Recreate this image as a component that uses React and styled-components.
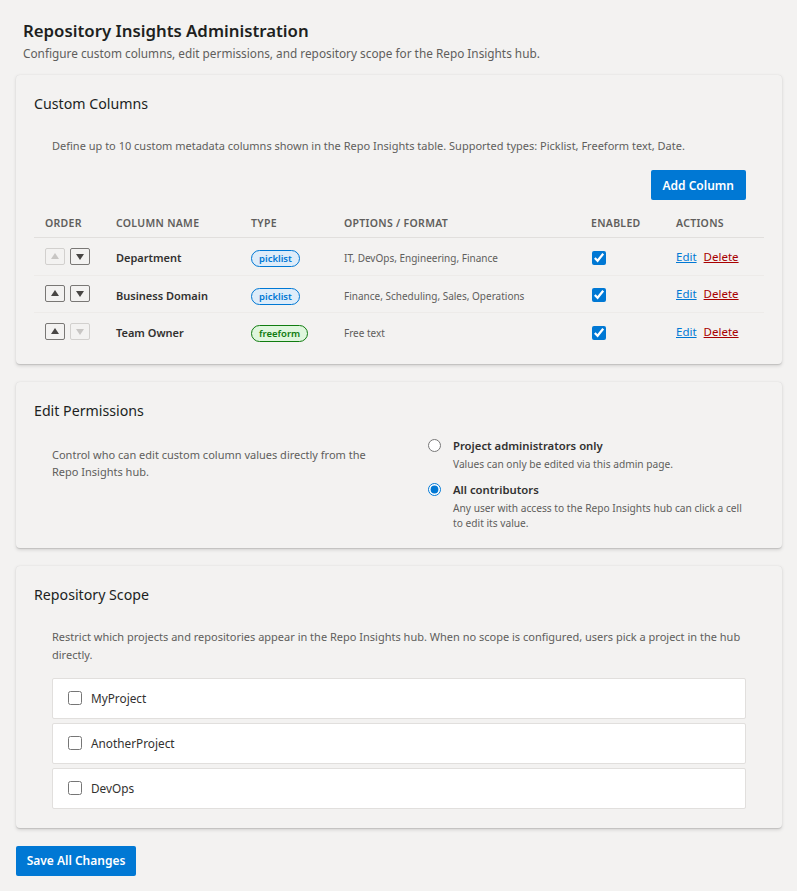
import styled, { createGlobalStyle } from 'styled-components';

const GlobalStyle = createGlobalStyle`
  body {
    margin: 0;
    background: #f3f2f1;
    font-family: "Segoe UI", "Noto Sans", sans-serif;
    color: #323130;
  }
`;

const columns = [
  { name: 'Department', type: 'picklist', options: 'IT, DevOps, Engineering, Finance', first: true },
  { name: 'Business Domain', type: 'picklist', options: 'Finance, Scheduling, Sales, Operations' },
  { name: 'Team Owner', type: 'freeform', options: 'Free text', last: true },
];

const projects = ['MyProject', 'AnotherProject', 'DevOps'];

// small filled triangle used by the reorder buttons
const Arrow = ({ down }) => (
  <svg width="8" height="7" viewBox="0 0 8 7">
    <polygon points={down ? '0,1 8,1 4,7' : '0,6 8,6 4,0'} fill="currentColor" />
  </svg>
);

const App = () => {
  return (
    <Page>
      <GlobalStyle />
      <Header>
        <Title>Repository Insights Administration</Title>
        <Subtitle>Configure custom columns, edit permissions, and repository scope for the Repo Insights hub.</Subtitle>
      </Header>

      <Card>
        <CardTitle>Custom Columns</CardTitle>
        <Section>
          <Description>
            Define up to 10 custom metadata columns shown in the Repo Insights table. Supported types: Picklist, Freeform text, Date.
          </Description>
          <Toolbar>
            <PrimaryButton>Add Column</PrimaryButton>
          </Toolbar>
        </Section>
        <Table>
          <colgroup>
            <col style={{ width: 71 }} />
            <col style={{ width: 135 }} />
            <col style={{ width: 93 }} />
            <col style={{ width: 247 }} />
            <col style={{ width: 85 }} />
            <col />
          </colgroup>
          <thead>
            <tr>
              <Th>Order</Th>
              <Th>Column Name</Th>
              <Th>Type</Th>
              <Th>Options / Format</Th>
              <Th>Enabled</Th>
              <Th>Actions</Th>
            </tr>
          </thead>
          <tbody>
            {columns.map((c) => (
              <Row key={c.name}>
                <Td>
                  <OrderButtons>
                    <ArrowButton disabled={c.first}><Arrow /></ArrowButton>
                    <ArrowButton disabled={c.last}><Arrow down /></ArrowButton>
                  </OrderButtons>
                </Td>
                <Td><ColumnName>{c.name}</ColumnName></Td>
                <Td><TypePill $kind={c.type}>{c.type}</TypePill></Td>
                <Td><Options>{c.options}</Options></Td>
                <Td><Check type="checkbox" defaultChecked /></Td>
                <Td>
                  <Actions>
                    <ActionLink href="#">Edit</ActionLink>
                    <ActionLink href="#" $danger>Delete</ActionLink>
                  </Actions>
                </Td>
              </Row>
            ))}
          </tbody>
        </Table>
      </Card>

      <Card>
        <CardTitle>Edit Permissions</CardTitle>
        <PermissionsSection>
          <PermDescription>
            Control who can edit custom column values directly from the Repo Insights hub.
          </PermDescription>
          <RadioGroup>
            <RadioOption>
              <Radio type="radio" name="perm" />
              <div>
                <OptionLabel>Project administrators only</OptionLabel>
                <OptionHint>Values can only be edited via this admin page.</OptionHint>
              </div>
            </RadioOption>
            <RadioOption>
              <Radio type="radio" name="perm" defaultChecked />
              <div>
                <OptionLabel>All contributors</OptionLabel>
                <OptionHint>Any user with access to the Repo Insights hub can click a cell to edit its value.</OptionHint>
              </div>
            </RadioOption>
          </RadioGroup>
        </PermissionsSection>
      </Card>

      <Card>
        <CardTitle>Repository Scope</CardTitle>
        <Section>
          <Description>
            Restrict which projects and repositories appear in the Repo Insights hub. When no scope is configured, users pick a project in the hub directly.
          </Description>
          <ProjectList>
            {projects.map((p) => (
              <ProjectItem key={p}>
                <ScopeCheck type="checkbox" />
                <span>{p}</span>
              </ProjectItem>
            ))}
          </ProjectList>
        </Section>
      </Card>

      <SaveButton>Save All Changes</SaveButton>
    </Page>
  );
};
export default App;

const Page = styled.div`
  padding: 16px 15px 16px 16px;
  display: flex;
  flex-direction: column;
  gap: 18px;
  align-items: flex-start;
`;

const Header = styled.div`
  padding: 0 7px;
  margin-top: 2px;
  margin-bottom: -5px;
`;

const Title = styled.h1`
  margin: 0;
  font-size: 16.8px;
  line-height: 26px;
  font-weight: 600;
  color: #201f1e;
`;

const Subtitle = styled.div`
  font-size: 11.8px;
  line-height: 18px;
  color: #605e5c;
`;

const Card = styled.div`
  align-self: stretch;
  background: #f3f2f1;
  border-radius: 4px;
  box-shadow: 0 1.6px 3.6px rgba(0, 0, 0, 0.13), 0 0.3px 0.9px rgba(0, 0, 0, 0.11);
  padding: 18px 18px 14px;
`;

const CardTitle = styled.h2`
  margin: 0;
  font-size: 14.2px;
  line-height: 22px;
  font-weight: 400;
  color: #201f1e;
`;

const Section = styled.div`
  margin-top: 22px;
  padding: 0 18px;
`;

const Description = styled.p`
  margin: 0;
  font-size: 11px;
  line-height: 18px;
  color: #605e5c;
`;

const Toolbar = styled.div`
  display: flex;
  justify-content: flex-end;
  margin-top: 15px;
`;

const PrimaryButton = styled.button`
  height: 30px;
  padding: 0 12px;
  border: none;
  border-radius: 2px;
  background: #0078d4;
  color: #fff;
  font-family: inherit;
  font-size: 12px;
  font-weight: 600;
  white-space: nowrap;
`;

const Table = styled.table`
  width: 100%;
  table-layout: fixed;
  border-collapse: collapse;
  margin-top: 9px;
`;

const Th = styled.th`
  text-align: left;
  padding: 0 11px;
  height: 28px;
  font-size: 10.5px;
  font-weight: 600;
  letter-spacing: 0.3px;
  text-transform: uppercase;
  color: #605e5c;
  border-bottom: 1px solid #e1dfdd;
`;

const Row = styled.tr`
  border-bottom: 1px solid #edebe9;
  &:last-child {
    border-bottom: none;
  }
`;

const Td = styled.td`
  padding: 0 11px;
  height: 36.5px;
  vertical-align: middle;
`;

const OrderButtons = styled.div`
  display: flex;
  gap: 5px;
`;

const ArrowButton = styled.button`
  width: 20px;
  height: 17px;
  padding: 0;
  display: flex;
  align-items: center;
  justify-content: center;
  background: #f3f2f1;
  border: 1px solid ${(p) => (p.disabled ? '#d2d0ce' : '#797775')};
  border-radius: 2px;
  color: ${(p) => (p.disabled ? '#c8c6c4' : '#484644')};
`;

const ColumnName = styled.span`
  font-size: 11px;
  font-weight: 600;
  color: #323130;
`;

const TypePill = styled.span`
  display: inline-block;
  padding: 0 7px;
  height: 17px;
  line-height: 15px;
  box-sizing: border-box;
  border-radius: 9px;
  font-size: 9.5px;
  font-weight: 600;
  border: 1px solid ${(p) => (p.$kind === 'freeform' ? '#107c10' : '#0078d4')};
  background: ${(p) => (p.$kind === 'freeform' ? '#dff6dd' : '#deecf9')};
  color: ${(p) => (p.$kind === 'freeform' ? '#107c10' : '#0078d4')};
`;

const Options = styled.span`
  font-size: 10px;
  color: #605e5c;
`;

const Check = styled.input`
  margin: 0 0 0 1px;
  width: 14px;
  height: 14px;
  accent-color: #0078d4;
  vertical-align: middle;
`;

const Actions = styled.div`
  display: flex;
  gap: 7px;
`;

const ActionLink = styled.a`
  font-size: 11.5px;
  color: ${(p) => (p.$danger ? '#a80000' : '#0078d4')};
  text-decoration: underline;
`;

const PermissionsSection = styled.div`
  margin-top: 16px;
  padding: 0 18px 3px;
  display: grid;
  grid-template-columns: 1fr 1fr;
  gap: 40px;
`;

const PermDescription = styled.p`
  margin: 8px 0 0;
  font-size: 11px;
  line-height: 17px;
  color: #605e5c;
`;

const RadioGroup = styled.div`
  display: flex;
  flex-direction: column;
  gap: 10px;
  margin-left: 9px;
`;

const RadioOption = styled.label`
  display: flex;
  gap: 12px;
  align-items: flex-start;
`;

const Radio = styled.input`
  margin: 1px 0 0;
  width: 13px;
  height: 13px;
  accent-color: #0078d4;
  flex-shrink: 0;
`;

const OptionLabel = styled.div`
  font-size: 11.3px;
  line-height: 16px;
  font-weight: 600;
  color: #323130;
`;

const OptionHint = styled.div`
  font-size: 10.2px;
  line-height: 15px;
  color: #605e5c;
  margin-top: 3px;
`;

const ProjectList = styled.div`
  margin-top: 14px;
  display: flex;
  flex-direction: column;
  gap: 4px;
  padding-bottom: 5px;
`;

const ProjectItem = styled.label`
  display: flex;
  align-items: center;
  gap: 9px;
  height: 41px;
  box-sizing: border-box;
  padding: 0 15px;
  background: #fff;
  border: 1px solid #e1dfdd;
  border-radius: 2px;
  font-size: 11.8px;
  color: #323130;
`;

const ScopeCheck = styled.input`
  margin: 0;
  width: 14px;
  height: 14px;
  accent-color: #0078d4;
`;

const SaveButton = styled(PrimaryButton)`
  padding: 0;
  width: 120px;
`;
